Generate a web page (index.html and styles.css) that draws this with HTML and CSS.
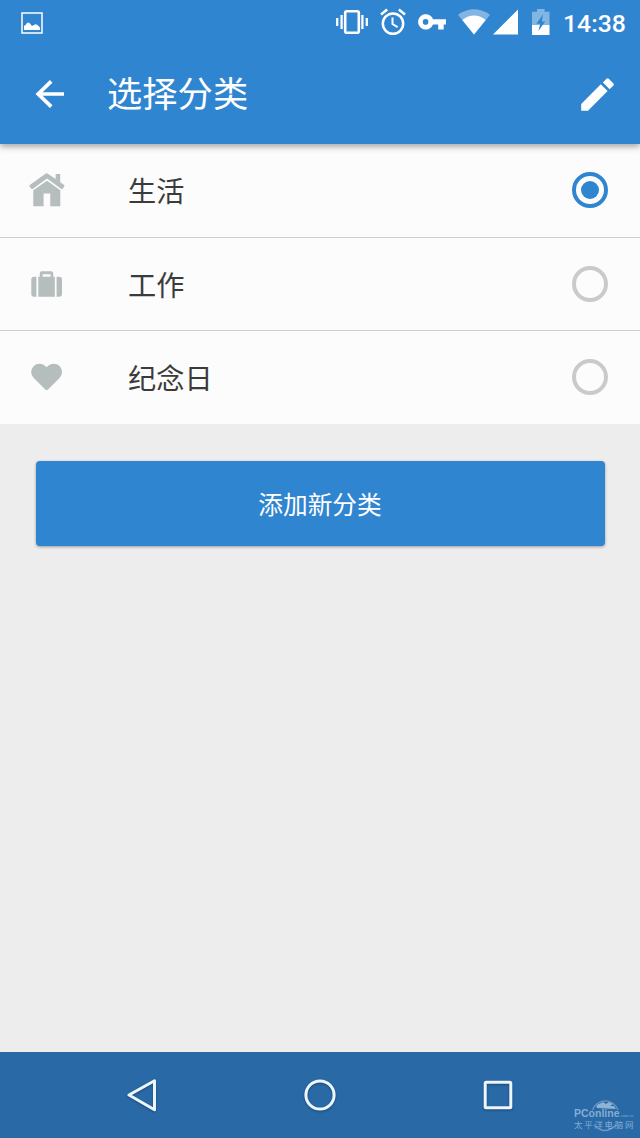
FILE: index.html
```html
<!DOCTYPE html>
<html lang="zh-CN">
<head>
<meta charset="utf-8">
<title>选择分类</title>
<link rel="stylesheet" href="styles.css">
</head>
<body>
<div class="screen">
  <header class="header">
    <div class="status">
      <svg class="status-picture" width="22" height="22" viewBox="0 0 22 22"><path d="M1 1H21V21H1Z" fill="none" stroke="#fff" stroke-width="1.5"/><path d="M3 18V14Q5 13 6 11Q7 10 8.5 11L11 14 14 12.5Q15 12 16.5 13L19 15.5V18Z" fill="#fff"/></svg>
      <svg class="status-vibrate" width="32" height="26" viewBox="0 0 32 26" fill="none" stroke="#fff"><rect x="9.2" y="2.2" width="13.6" height="21.6" rx="1.5" stroke-width="2.6"/><path d="M5.6 6V20M26.4 6V20" stroke-width="2.3"/><path d="M1.2 9V17M30.8 9V17" stroke-width="2.3"/></svg>
      <svg class="status-alarm" width="26" height="28" viewBox="0 0 26 28" fill="none" stroke="#fff"><circle cx="13" cy="15.6" r="10.2" stroke-width="2.5"/><path d="M1 6.4 7.2 1.5M18.8 1.5 25 6.4" stroke-width="2.5"/><path d="M12.5 9.5V16L17.6 19.2" stroke-width="2"/></svg>
      <svg class="status-key" width="28" height="16" viewBox="0 0 28 16"><path fill="#fff" fill-rule="evenodd" d="M15 5.2A7.7 7.7 0 1 0 15 10.6H20.2V15.6H25.7V10.6H28V5.2ZM7.6 5.1A2.8 2.8 0 1 1 7.6 10.7A2.8 2.8 0 0 1 7.6 5.1Z"/></svg>
      <svg class="status-wifi" width="32" height="26" viewBox="0 0 32 26"><path d="M0 5.8Q16-5.2 32 5.8L16 25.5Z" fill="#83b5e2"/><path d="M4.3 11Q16 2.2 27.7 11L16 25.5Z" fill="#fff"/></svg>
      <svg class="status-signal" width="25" height="26" viewBox="0 0 25 26"><path d="M25 .5V25.5H0Z" fill="#fff"/></svg>
      <svg class="status-battery" width="18" height="26" viewBox="0 0 18 26"><path d="M0 2.8H5V0H12.6V2.8H17.5V16H0Z" fill="#83b5e2"/><path d="M0 16H17.5V26H0Z" fill="#fff"/><path d="M11 5.5 4.3 14.7H8.2L6.4 22 13.2 12.5H9.8Z" fill="#3085d0"/></svg>
      <span class="clock">14:38</span>
    </div>
    <div class="toolbar">
      <svg class="back" width="30" height="28" viewBox="0 0 30 28" fill="none" stroke="#fff" stroke-width="3.7"><path d="M16.2 1.4 3.2 14 16.2 26.6M3 14H29"/></svg>
      <h1 class="title">选择分类</h1>
      <svg class="edit" width="33" height="33" viewBox="0 0 33 33" fill="#fff"><path d="M.2 32.7V26L19.8 6.3 26.6 13 7 32.7ZM21.8 4.4 25.3.9Q26.6-.3 28 .9L32.2 5.2Q33.4 6.4 32.2 7.7L28.6 11.2Z"/></svg>
    </div>
  </header>
  <main class="content">
    <ul class="list">
      <li class="row">
        <svg class="row-icon" width="36" height="34" viewBox="0 0 36 34" fill="#b5bdbd"><path d="M18 .3 26.7 6V1H31.2V9.2L35.2 12Q35.8 12.8 35.2 13.6L33.7 15.7Q33 16.4 32 15.7L18 5.6 4 15.7Q3 16.4 2.3 15.7L.6 13.6Q0 12.8.8 12.1L16.5.8Q17.3.2 18 .3Z"/><path d="M18 7.8 31.3 17.2V33.2H21.3V20.5H14.6V33.2H4.3V17.2Z"/></svg>
        <span class="label">生活</span>
        <span class="radio radio-on"></span>
      </li>
      <li class="row">
        <svg class="row-icon" width="36" height="34" viewBox="0 0 36 34" fill="#b5bdbd"><path d="M5 9.7H7.4V29.7H5Q2.3 29.7 2.3 27V12.4Q2.3 9.7 5 9.7ZM27.6 9.7H30Q33 9.7 33 12.4V27Q33 29.7 30 29.7H27.6Z"/><path fill-rule="evenodd" d="M10.8 9.7V6.3Q10.8 4.3 12.8 4.3H22.2Q24.2 4.3 24.2 6.3V9.7H25.8V29.7H9.3V9.7ZM13.7 7.2V9.7H21.6V7.2Z"/></svg>
        <span class="label">工作</span>
        <span class="radio"></span>
      </li>
      <li class="row">
        <svg class="row-icon" width="36" height="34" viewBox="0 0 36 34" fill="#b5bdbd"><path d="M17.6 7.3C21 2.7 27 2.7 30.5 6C34 9.5 33.7 14.7 30.5 17.9L19 29.4Q17.6 30.6 16.3 29.4L4.8 17.9C1.5 14.7 1.3 9.5 4.8 6C8.2 2.7 14.2 2.7 17.6 7.3Z"/></svg>
        <span class="label">纪念日</span>
        <span class="radio"></span>
      </li>
    </ul>
    <button class="add">添加新分类</button>
  </main>
  <nav class="nav">
    <svg width="34" height="36" viewBox="0 0 34 36"><path d="M4 18 29.5 3.8V32.7Z"/></svg>
    <svg width="34" height="36" viewBox="0 0 34 36"><circle cx="17" cy="18" r="14.1"/></svg>
    <svg width="34" height="36" viewBox="0 0 34 36"><rect x="4.2" y="5.2" width="25.6" height="25.6" rx="1"/></svg>
  </nav>
  <div class="watermark">
    <svg class="globe" width="30" height="32" viewBox="0 0 30 32"><path d="M2.5 10A13.5 13.5 0 0 1 28 10" fill="none" stroke="#6f9ac6" stroke-width="1.2"/><path d="M7 8Q5 5 10 3.5L13 2 16 4 19 2 23 4 20 6 24 6 26 9Z" fill="#8fb2d5"/><path d="M4 25Q15 36 26 25" fill="none" stroke="#6f9ac6" stroke-width="1.5"/></svg>
    <div class="brand">PConline<span class="domain">.com.cn</span></div>
    <div class="site">太平洋电脑网</div>
  </div>
</div>
</body>
</html>
```
FILE: styles.css
```css
* { box-sizing: border-box; }
body { margin: 0; font-family: Roboto, "Noto Sans CJK SC", sans-serif; }
svg { display: block; flex: none; }
.screen { position: relative; width: 640px; height: 1138px; display: flex; flex-direction: column; background: #ededed; overflow: hidden; }
.header { position: relative; z-index: 1; height: 144px; flex: none; background: #3085d0; color: #fff; box-shadow: 0 3px 6px rgba(0,0,0,.32); }
.status { height: 44px; display: flex; align-items: center; padding: 0 14px 0 21px; }
.status-picture { margin-top: 1px; }
.status-vibrate { margin-left: auto; margin-right: 12px; }
.status-alarm { margin-right: 12px; }
.status-key { margin-right: 12px; }
.status-wifi { margin-right: 3px; }
.status-signal { margin-right: 14px; }
.status-battery { margin-right: 13px; }
.clock { width: 63px; padding-top: 3px; font-size: 24.8px; line-height: 30px; font-weight: 500; white-space: nowrap; }
.toolbar { height: 100px; display: flex; align-items: center; padding: 0 26px 0 35px; }
.title { margin: -4px 0 0 42px; font-size: 35.3px; line-height: 50px; font-weight: 400; font-family: "Noto Sans CJK SC", sans-serif; }
.edit { margin-left: auto; }
.content { flex: 1; }
.list { margin: 0; padding: 0; list-style: none; height: 280px; display: grid; grid-template-rows: 94px 93px 93px; background: #fcfcfc; }
.row { display: flex; align-items: center; padding: 0 32px 1px 29px; border-bottom: 1px solid #cfcfcf; }
.row:last-child { border-bottom: 0; padding-bottom: 1px; }
.row:first-child { padding-bottom: 2px; }
.label { margin-left: 63px; margin-top: 1px; font-size: 28.2px; line-height: 42px; color: #3b3b3b; font-family: "Noto Sans CJK SC", sans-serif; }
.row:nth-child(2) .label, .row:last-child .label { margin-top: 0; }
.radio { width: 36px; height: 36px; margin-left: auto; border: 4px solid #cacaca; border-radius: 50%; display: grid; place-items: center; }
.radio-on { border-color: #3085d0; }
.radio-on::after { content: ""; width: 18px; height: 18px; border-radius: 50%; background: #3085d0; }
.add { display: block; width: 569px; height: 85px; margin: 37px auto 0; padding: 0 0 2px; border: 0; border-radius: 4px; background: #3085d0; color: #fff; font-family: "Noto Sans CJK SC", sans-serif; font-size: 24.7px; box-shadow: 0 1px 3px rgba(0,0,0,.35); }
.nav { height: 86px; flex: none; display: flex; align-items: center; justify-content: space-between; padding: 0 125px; background: #2869a6; }
.nav svg { fill: none; stroke: #edf5fd; stroke-width: 3; stroke-linejoin: round; filter: drop-shadow(0 1px 1px rgba(0,0,0,.3)); }
.watermark { position: absolute; left: 574px; top: 1107px; width: 62px; color: #86add3; font-family: "Liberation Sans", "Noto Sans CJK SC", sans-serif; white-space: nowrap; }
.globe { position: absolute; left: 16px; top: -7px; }
.brand { position: relative; font-size: 10.5px; line-height: 13px; font-weight: 700; }
.domain { font-size: 4px; font-weight: 400; }
.site { position: relative; font-size: 8.5px; line-height: 6px; letter-spacing: 1.7px; }
```
